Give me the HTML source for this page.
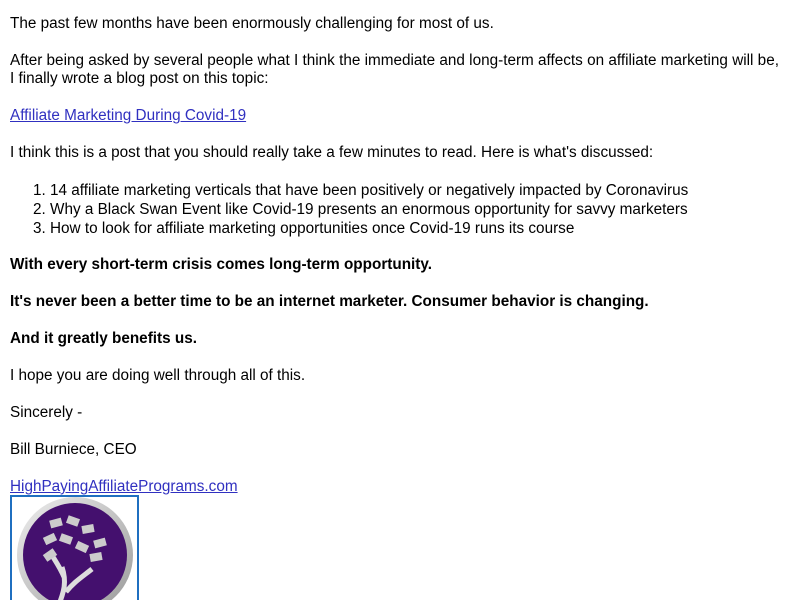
<!DOCTYPE html>
<html><head><meta charset="utf-8"><style>
html,body{margin:0;padding:0;background:#fff;overflow:hidden}
body{padding:15px 18px 0 10px;font-family:"Liberation Sans",Arial,sans-serif;font-size:15.3px;line-height:18.5px;color:#000;width:772px;height:585px}
p{margin:0 0 18.4px 0}
a{color:#3030c0}
ol{margin:0 0 18.4px 0;padding-left:40px}
ol li{line-height:19px}
.logo{width:125px;height:120px;border:2px solid #1f6fc0;border-bottom:none;margin-top:-1px;overflow:hidden}
</style></head><body>
<p>The past few months have been enormously challenging for most of us.</p>
<p>After being asked by several people what I think the immediate and long-term affects on affiliate marketing will be,<br>I finally wrote a blog post on this topic:</p>
<p><a href="#">Affiliate Marketing During Covid-19</a></p>
<p>I think this is a post that you should really take a few minutes to read. Here is what's discussed:</p>
<ol>
<li>14 affiliate marketing verticals that have been positively or negatively impacted by Coronavirus</li>
<li>Why a Black Swan Event like Covid-19 presents an enormous opportunity for savvy marketers</li>
<li>How to look for affiliate marketing opportunities once Covid-19 runs its course</li>
</ol>
<p><b>With every short-term crisis comes long-term opportunity.</b></p>
<p><b>It's never been a better time to be an internet marketer. Consumer behavior is changing.</b></p>
<p><b>And it greatly benefits us.</b></p>
<p>I hope you are doing well through all of this.</p>
<p>Sincerely -</p>
<p>Bill Burniece, CEO</p>
<p style="margin:0"><a href="#">HighPayingAffiliatePrograms.com</a></p>
<div class="logo">
<svg width="125" height="120" viewBox="0 0 125 120">
<defs><linearGradient id="g" x1="0" y1="0" x2="1" y2="1"><stop offset="0" stop-color="#eee"/><stop offset="1" stop-color="#999"/></linearGradient></defs>
<circle cx="63" cy="58" r="58" fill="url(#g)"/>
<circle cx="63" cy="58" r="52" fill="#44106e"/>
<path d="M46 110 C52 95 55 85 50 70 M54 95 C62 85 70 80 80 72 M52 80 C48 70 42 62 38 55" stroke="#ddd" stroke-width="5" fill="none"/>
<g fill="#ccc">
<rect x="38" y="22" width="12" height="8" transform="rotate(-15 44 26)"/>
<rect x="55" y="20" width="12" height="8" transform="rotate(20 61 24)"/>
<rect x="70" y="28" width="12" height="8" transform="rotate(-10 76 32)"/>
<rect x="32" y="38" width="12" height="8" transform="rotate(-25 38 42)"/>
<rect x="48" y="38" width="12" height="8" transform="rotate(20 54 42)"/>
<rect x="82" y="42" width="12" height="8" transform="rotate(-15 88 46)"/>
<rect x="64" y="46" width="12" height="8" transform="rotate(25 70 50)"/>
<rect x="32" y="54" width="12" height="8" transform="rotate(-35 38 58)"/>
<rect x="78" y="56" width="12" height="8" transform="rotate(-10 84 60)"/>
</g>
</svg>
</div>
</body></html>
